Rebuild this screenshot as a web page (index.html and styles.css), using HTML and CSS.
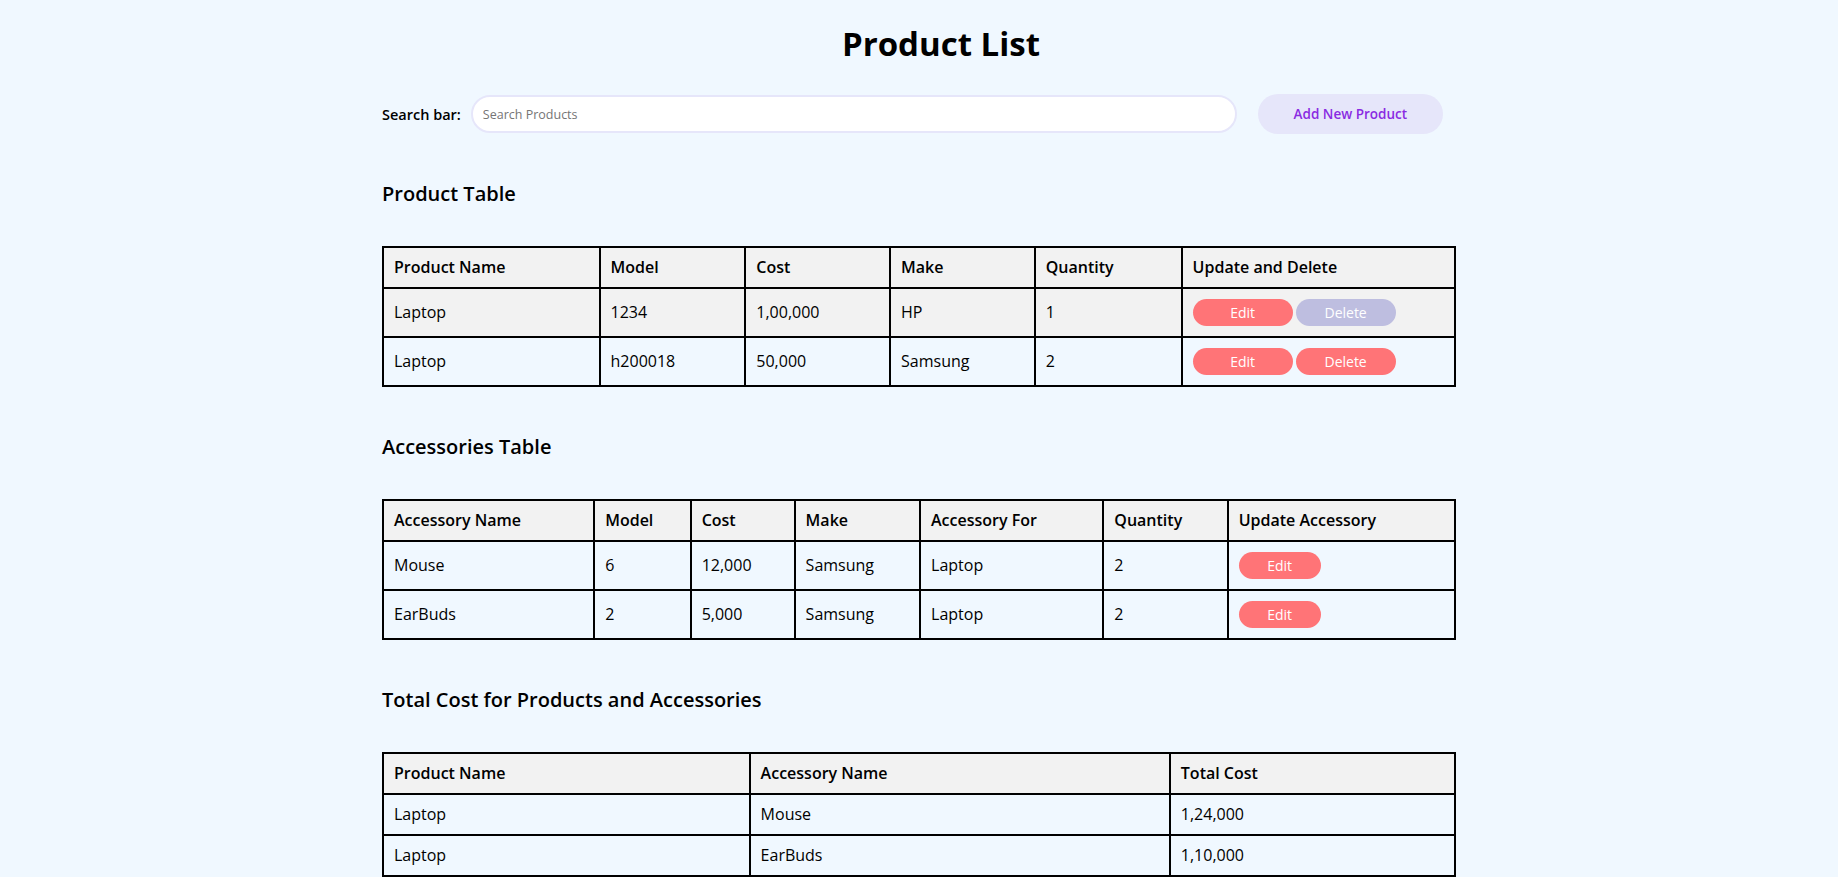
FILE: index.html
```html
<!DOCTYPE html>
<html lang="en">
<head>
<meta charset="utf-8">
<title>Product List</title>
<link rel="stylesheet" href="styles.css">
</head>
<body>
<main class="page">
  <h1 class="title">Product List</h1>

  <div class="search-row">
    <label class="search-label" for="search">Search bar:</label>
    <input id="search" class="search-input" type="text" placeholder="Search Products">
    <button class="add-btn" type="button">Add New Product</button>
  </div>

  <section class="section">
    <h2 class="section-title">Product Table</h2>
    <table class="data-table">
      <colgroup>
        <col class="p-c1"><col class="p-c2"><col class="p-c3"><col class="p-c4"><col class="p-c5"><col class="p-c6">
      </colgroup>
      <thead>
        <tr><th>Product Name</th><th>Model</th><th>Cost</th><th>Make</th><th>Quantity</th><th>Update and Delete</th></tr>
      </thead>
      <tbody>
        <tr class="row-hover">
          <td>Laptop</td><td>1234</td><td>1,00,000</td><td>HP</td><td>1</td>
          <td><div class="btn-group"><button class="btn" type="button">Edit</button><button class="btn btn-hover" type="button">Delete</button></div></td>
        </tr>
        <tr>
          <td>Laptop</td><td>h200018</td><td>50,000</td><td>Samsung</td><td>2</td>
          <td><div class="btn-group"><button class="btn" type="button">Edit</button><button class="btn" type="button">Delete</button></div></td>
        </tr>
      </tbody>
    </table>
  </section>

  <section class="section">
    <h2 class="section-title">Accessories Table</h2>
    <table class="data-table">
      <colgroup>
        <col class="a-c1"><col class="a-c2"><col class="a-c3"><col class="a-c4"><col class="a-c5"><col class="a-c6"><col class="a-c7">
      </colgroup>
      <thead>
        <tr><th>Accessory Name</th><th>Model</th><th>Cost</th><th>Make</th><th>Accessory For</th><th>Quantity</th><th>Update Accessory</th></tr>
      </thead>
      <tbody>
        <tr>
          <td>Mouse</td><td>6</td><td>12,000</td><td>Samsung</td><td>Laptop</td><td>2</td>
          <td><div class="btn-group"><button class="btn btn-small" type="button">Edit</button></div></td>
        </tr>
        <tr>
          <td>EarBuds</td><td>2</td><td>5,000</td><td>Samsung</td><td>Laptop</td><td>2</td>
          <td><div class="btn-group"><button class="btn btn-small" type="button">Edit</button></div></td>
        </tr>
      </tbody>
    </table>
  </section>

  <section class="section">
    <h2 class="section-title">Total Cost for Products and Accessories</h2>
    <table class="data-table">
      <colgroup>
        <col class="t-c1"><col class="t-c2"><col class="t-c3">
      </colgroup>
      <thead>
        <tr><th>Product Name</th><th>Accessory Name</th><th>Total Cost</th></tr>
      </thead>
      <tbody>
        <tr><td>Laptop</td><td>Mouse</td><td>1,24,000</td></tr>
        <tr><td>Laptop</td><td>EarBuds</td><td>1,10,000</td></tr>
      </tbody>
    </table>
  </section>
</main>
</body>
</html>
```

FILE: styles.css
```css
html, body {
  margin: 0;
  padding: 0;
}

body {
  background: #f0f8ff;
  color: #000;
  font-family: "Open Sans", "Noto Sans", sans-serif;
}

.page {
  width: 1074px;
  margin: 0 auto;
  padding-top: 22px;
}

.title {
  margin: 0;
  padding-left: 44px;
  font-size: 33px;
  line-height: 44px;
  font-weight: 700;
  text-align: center;
}

.search-row {
  display: flex;
  align-items: center;
  height: 40px;
  margin-top: 28px;
}

.search-label {
  font-size: 14.5px;
  font-weight: 600;
  margin-right: 10px;
}

.search-input {
  box-sizing: border-box;
  width: 766px;
  height: 38px;
  padding: 0 10px;
  border: 2px solid #e6e6fa;
  border-radius: 20px;
  background: #fff;
  font-family: "Open Sans", "Noto Sans", sans-serif;
  font-size: 12.5px;
  color: #000;
  outline: none;
}

.search-input::placeholder {
  color: #757575;
}

.add-btn {
  width: 185px;
  height: 40px;
  margin-left: 21px;
  padding: 0;
  border: none;
  border-radius: 20px;
  background: #e6e6fa;
  color: #8a2be2;
  font-family: "Open Sans", "Noto Sans", sans-serif;
  font-size: 13.5px;
  font-weight: 600;
}

.section-title {
  margin: 46px 0 38px;
  font-size: 20px;
  line-height: 28px;
  font-weight: 600;
}

.data-table {
  width: 100%;
  border-collapse: collapse;
  table-layout: fixed;
}

.data-table th,
.data-table td {
  border: 2px solid #000;
  padding: 10px;
  text-align: left;
  vertical-align: middle;
  font-size: 16px;
  line-height: 19px;
  font-weight: 400;
}

.data-table th {
  background: #f2f2f2;
  font-weight: 600;
}

.data-table .row-hover td {
  background: #f2f2f2;
}

.btn-group {
  display: flex;
  gap: 3px;
}

.btn {
  width: 100px;
  height: 27px;
  padding: 0;
  border: none;
  border-radius: 14px;
  background: #ff7477;
  color: #fff;
  font-family: "Open Sans", "Noto Sans", sans-serif;
  font-size: 14px;
}

.btn-small {
  width: 82px;
}

.btn-hover {
  background: #bebee0;
}

.p-c1 { width: 20.2%; }
.p-c2 { width: 13.6%; }
.p-c3 { width: 13.5%; }
.p-c4 { width: 13.5%; }
.p-c5 { width: 13.7%; }
.p-c6 { width: 25.5%; }

.a-c1 { width: 19.7%; }
.a-c2 { width: 9.0%; }
.a-c3 { width: 9.7%; }
.a-c4 { width: 11.7%; }
.a-c5 { width: 17.1%; }
.a-c6 { width: 11.6%; }
.a-c7 { width: 21.2%; }

.t-c1 { width: 34.2%; }
.t-c2 { width: 39.2%; }
.t-c3 { width: 26.6%; }
```
